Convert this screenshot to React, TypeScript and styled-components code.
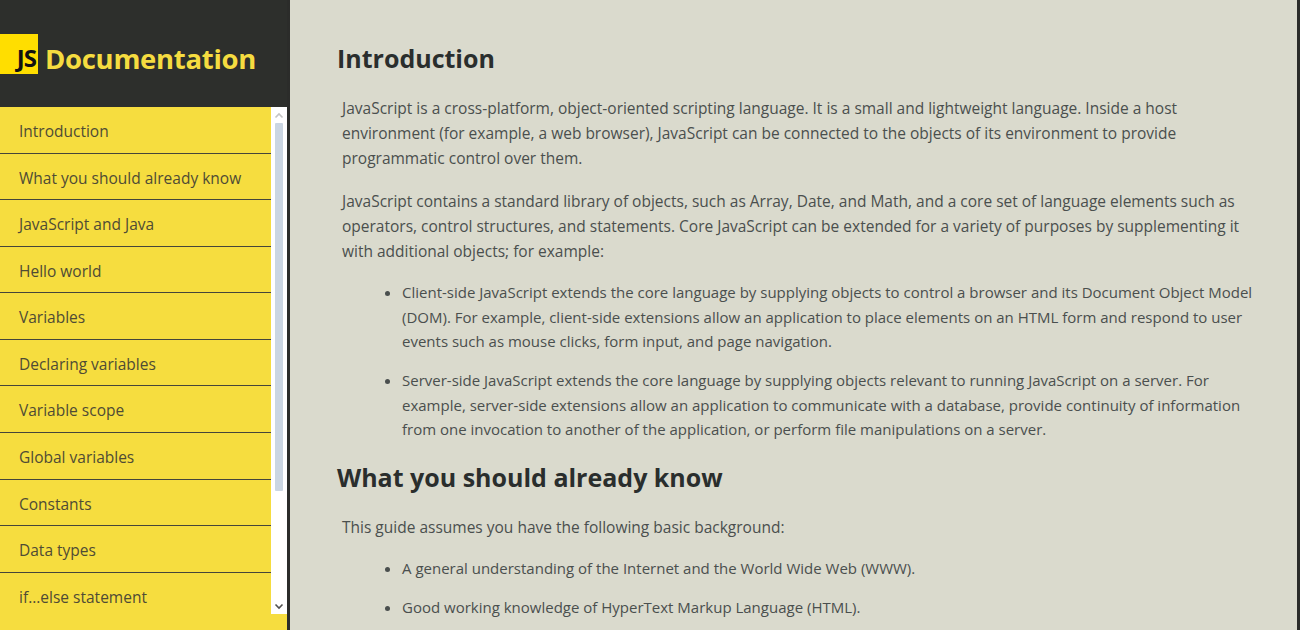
import React from "react";
import styled, { createGlobalStyle } from "styled-components";

const GlobalStyle = createGlobalStyle`
  html, body {
    margin: 0;
    padding: 0;
    height: 100%;
    background: #2b2c2a;
    font-family: "Open Sans", "Liberation Sans", sans-serif;
  }
  * {
    box-sizing: border-box;
  }
`;

const Page = styled.div`
  display: grid;
  grid-template-columns: 287px 1fr;
  column-gap: 3px;
  height: 630px;
  padding-right: 3px;
  overflow: hidden;
`;

const Sidebar = styled.nav`
  display: flex;
  flex-direction: column;
  background: #f6dd3f;
  height: 630px;
`;

const Header = styled.header`
  height: 107px;
  flex-shrink: 0;
  background: #2d2f2c;
  display: flex;
  align-items: center;
  gap: 7px;
`;

const LogoBox = styled.span`
  width: 38px;
  height: 40px;
  background: #ffde00;
  color: #111;
  font-weight: 700;
  font-size: 24px;
  line-height: 1;
  display: flex;
  align-items: flex-end;
  justify-content: flex-end;
  padding: 0 2px 4px 0;
  letter-spacing: -1px;
`;

const Title = styled.h1`
  margin: 0;
  font-size: 27.5px;
  font-weight: 700;
  color: #f5dc40;
  letter-spacing: -0.3px;
  padding-top: 10px;
`;

const NavBody = styled.div`
  display: flex;
  height: 507px;
  flex-shrink: 0;
`;

const NavList = styled.ul`
  list-style: none;
  margin: 0;
  padding: 0;
  width: 271px;
  overflow: hidden;
`;

const NavItem = styled.li`
  background: #f6dd3f;
  border-bottom: 1px solid #45453a;
  padding: 16px 10px 12px 19px;
  font-size: 15.5px;
  line-height: 17.56px;
  color: #4f4b35;
  white-space: nowrap;
`;

const ScrollBar = styled.div`
  width: 16px;
  background: #ffffff;
  display: flex;
  flex-direction: column;
  align-items: center;
`;

const ScrollArrow = styled.div`
  width: 16px;
  height: 16px;
  display: flex;
  align-items: center;
  justify-content: center;
`;

const ScrollTrack = styled.div`
  flex: 1;
  width: 100%;
  display: flex;
  justify-content: center;
`;

const Thumb = styled.div`
  width: 8px;
  height: 368px;
  background: #cbd6e2;
  border-radius: 1px;
`;

const Main = styled.main`
  background: #dadacd;
  height: 630px;
  overflow: hidden;
  padding: 42px 42px 0 47px;
`;

const Section = styled.section`
  margin-bottom: 19px;
`;

const Heading = styled.h2`
  margin: 0 0 22px;
  font-size: 25px;
  line-height: 32px;
  font-weight: 700;
  color: #2a2e2d;
`;

const Article = styled.article`
  padding-left: 5px;
`;

const Para = styled.p`
  margin: 0 0 18px;
  font-size: 15.5px;
  line-height: 25px;
  color: #4a4f4e;
`;

const List = styled.ul`
  margin: -2px 0 0;
  padding-left: 60px;
`;

const Item = styled.li`
  margin-bottom: 14.5px;
  font-size: 15px;
  line-height: 24.5px;
  color: #4a4f4e;
`;

const navItems = [
  "Introduction",
  "What you should already know",
  "JavaScript and Java",
  "Hello world",
  "Variables",
  "Declaring variables",
  "Variable scope",
  "Global variables",
  "Constants",
  "Data types",
  "if...else statement",
  "while statement",
  "Function declarations",
  "Reference",
];

const Chevron = ({ up, color }: { up?: boolean; color: string }) => (
  <svg width="10" height="7" viewBox="0 0 10 7">
    <path
      d={up ? "M1.5 5.5 L5 2 L8.5 5.5" : "M1.5 1.5 L5 5 L8.5 1.5"}
      fill="none"
      stroke={color}
      strokeWidth="1.6"
    />
  </svg>
);

export default function App() {
  return (
    <>
      <GlobalStyle />
      <Page>
        <Sidebar>
          <Header>
            <LogoBox>JS</LogoBox>
            <Title>Documentation</Title>
          </Header>
          <NavBody>
            <NavList>
              {navItems.map((item) => (
                <NavItem key={item}>{item}</NavItem>
              ))}
            </NavList>
            <ScrollBar>
              <ScrollArrow>
                <Chevron up color="#c4c4c4" />
              </ScrollArrow>
              <ScrollTrack>
                <Thumb />
              </ScrollTrack>
              <ScrollArrow>
                <Chevron color="#505050" />
              </ScrollArrow>
            </ScrollBar>
          </NavBody>
        </Sidebar>
        <Main>
          <Section>
            <Heading>Introduction</Heading>
            <Article>
              <Para>
                JavaScript is a cross-platform, object-oriented scripting language. It is a small and
                lightweight language. Inside a host environment (for example, a web browser), JavaScript
                can be connected to the objects of its environment to provide programmatic control over
                them.
              </Para>
              <Para>
                JavaScript contains a standard library of objects, such as Array, Date, and Math, and a
                core set of language elements such as operators, control structures, and statements. Core
                JavaScript can be extended for a variety of purposes by supplementing it with additional
                objects; for example:
              </Para>
              <List>
                <Item>
                  Client-side JavaScript extends the core language by supplying objects to control a
                  browser and its Document Object Model (DOM). For example, client-side extensions allow
                  an application to place elements on an HTML form and respond to user events such as
                  mouse clicks, form input, and page navigation.
                </Item>
                <Item>
                  Server-side JavaScript extends the core language by supplying objects relevant to
                  running JavaScript on a server. For example, server-side extensions allow an application
                  to communicate with a database, provide continuity of information from one invocation to
                  another of the application, or perform file manipulations on a server.
                </Item>
              </List>
            </Article>
          </Section>
          <Section>
            <Heading>What you should already know</Heading>
            <Article>
              <Para>This guide assumes you have the following basic background:</Para>
              <List>
                <Item>A general understanding of the Internet and the World Wide Web (WWW).</Item>
                <Item>Good working knowledge of HyperText Markup Language (HTML).</Item>
                <Item>
                  Some programming experience. If you are new to programming, try one of the tutorials
                  linked on the main page about JavaScript.
                </Item>
              </List>
            </Article>
          </Section>
        </Main>
      </Page>
    </>
  );
}
